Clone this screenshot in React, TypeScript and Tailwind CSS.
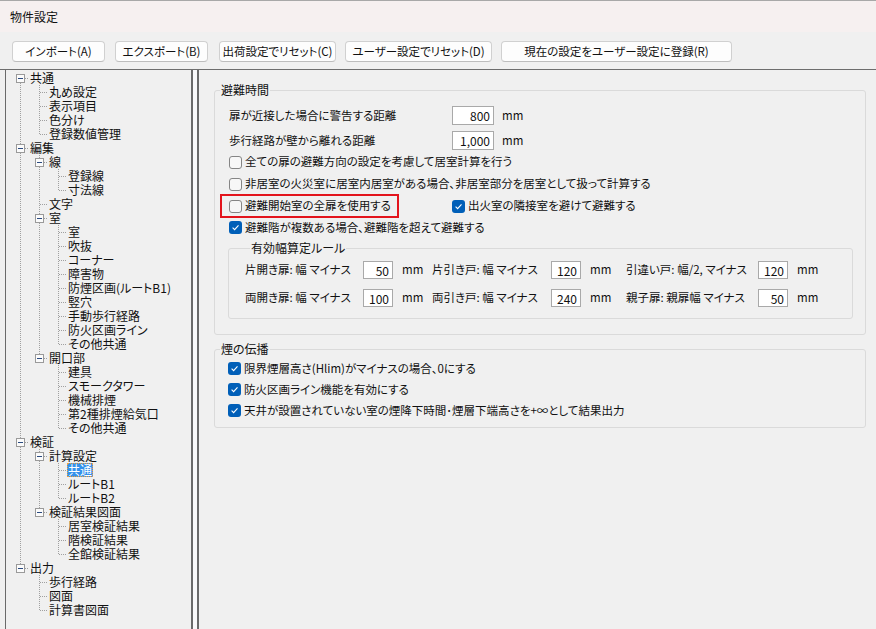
import clsx from "clsx";

type TreeNode = { label: string; selected?: boolean; children?: TreeNode[] };

type TreeRow = {
  label: string;
  rails: boolean[];
  last: boolean;
  first: boolean;
  expandable: boolean;
  selected?: boolean;
};

const leaf = (...labels: string[]): TreeNode[] => labels.map((label) => ({ label }));

const tree: TreeNode[] = [
  { label: "共通", children: leaf("丸め設定", "表示項目", "色分け", "登録数値管理") },
  {
    label: "編集",
    children: [
      { label: "線", children: leaf("登録線", "寸法線") },
      { label: "文字" },
      {
        label: "室",
        children: leaf(
          "室",
          "吹抜",
          "コーナー",
          "障害物",
          "防煙区画(ルートB1)",
          "竪穴",
          "手動歩行経路",
          "防火区画ライン",
          "その他共通",
        ),
      },
      {
        label: "開口部",
        children: leaf("建具", "スモークタワー", "機械排煙", "第2種排煙給気口", "その他共通"),
      },
    ],
  },
  {
    label: "検証",
    children: [
      {
        label: "計算設定",
        children: [{ label: "共通", selected: true }, { label: "ルートB1" }, { label: "ルートB2" }],
      },
      { label: "検証結果図面", children: leaf("居室検証結果", "階検証結果", "全館検証結果") },
    ],
  },
  { label: "出力", children: leaf("歩行経路", "図面", "計算書図面") },
];

const flatten = (nodes: TreeNode[], rails: boolean[], out: TreeRow[]) => {
  nodes.forEach((n, i) => {
    const last = i === nodes.length - 1;
    out.push({
      label: n.label,
      rails,
      last,
      first: rails.length === 0 && i === 0,
      expandable: !!n.children,
      selected: n.selected,
    });
    if (n.children) flatten(n.children, [...rails, !last], out);
  });
  return out;
};

const rows = flatten(tree, [], []);

const DOT = "#a0a0a0";

const TreeLine = ({ row }: { row: TreeRow }) => (
  <div className="flex h-[14px]">
    {row.rails.map((r, i) => (
      <svg key={i} width="19" height="14" className="shrink-0">
        {r && <line x1="10.5" y1="0" x2="10.5" y2="14" stroke={DOT} strokeDasharray="1 1" />}
      </svg>
    ))}
    <svg width="19" height="14" className="shrink-0">
      <line
        x1="10.5"
        y1={row.first ? 8 : 0}
        x2="10.5"
        y2={row.last ? 7 : 14}
        stroke={DOT}
        strokeDasharray="1 1"
      />
      <line x1="11" y1="7.5" x2="19" y2="7.5" stroke={DOT} strokeDasharray="1 1" />
      {row.expandable && (
        <>
          <rect x="6.5" y="3.5" width="8" height="8" fill="#fbfbfb" stroke="#9a9a9a" />
          <line x1="8" y1="7.5" x2="13" y2="7.5" stroke="#2a4a80" />
        </>
      )}
    </svg>
    <span
      className={clsx(
        "px-[1px] leading-[14px] whitespace-nowrap",
        row.selected &&
          "bg-[#3391ec] text-white outline outline-1 outline-dotted outline-[#f0a040] -outline-offset-1",
      )}
    >
      {row.label}
    </span>
  </div>
);

const Check = ({ checked }: { checked?: boolean }) => (
  <span
    className={clsx(
      "flex h-[13px] w-[13px] shrink-0 items-center justify-center rounded-[3px]",
      checked ? "bg-[#005fb8]" : "border border-[#858585] bg-[#f7f7f7]",
    )}
  >
    {checked && (
      <svg width="9" height="9" viewBox="0 0 9 9">
        <path d="M1.6 4.7 L3.6 6.6 L7.5 2.4" stroke="#fff" strokeWidth="1.1" fill="none" />
      </svg>
    )}
  </span>
);

const CheckItem = ({ checked, label, className }: { checked?: boolean; label: string; className?: string }) => (
  <label className={clsx("flex items-center gap-[3px] whitespace-nowrap", className)}>
    <Check checked={checked} />
    <span>{label}</span>
  </label>
);

const NumBox = ({ value, className }: { value: string; className?: string }) => (
  <input
    readOnly
    value={value}
    className={clsx(
      "border border-[#a9a9a9] bg-white pr-[3px] text-right text-[12px] leading-none outline-none",
      className,
    )}
  />
);

const WidthField = ({ label, value, labelW, className }: { label: string; value: string; labelW: string; className?: string }) => (
  <div className={clsx("flex items-center", className)}>
    <span className={clsx("whitespace-nowrap", labelW)}>{label}</span>
    <NumBox value={value} className="h-[18px] w-[30px]" />
    <span className="ml-[9px] w-[16px]">mm</span>
  </div>
);

const buttons = [
  { label: "インポート(A)", cls: "ml-[12px] w-[93px]" },
  { label: "エクスポート(B)", cls: "ml-[10px] w-[93px]" },
  { label: "出荷設定でリセット(C)", cls: "ml-[11px] w-[117px]" },
  { label: "ユーザー設定でリセット(D)", cls: "ml-[9px] w-[147px]" },
  { label: "現在の設定をユーザー設定に登録(R)", cls: "ml-[9px] w-[231px]" },
];

export default function App() {
  return (
    <div className="flex h-[629px] w-[876px] flex-col overflow-hidden bg-[#f0f0f0] font-['Noto_Sans_CJK_JP',sans-serif] text-[12px] text-[#111] [font-feature-settings:'palt']">
      <div className="flex h-[32px] items-center border-t border-[#a8a8a8] bg-[#f6f0f0] pl-[10px]">物件設定</div>

      <div className="flex h-[38px] border-b border-[#6d6d6d] pt-[9px]">
        {buttons.map((b) => (
          <button
            key={b.label}
            className={clsx(
              "h-[21px] rounded-[4px] border border-[#d0d0d0] border-b-[#bdbdbd] bg-[#fdfdfd] text-[11.5px] leading-none whitespace-nowrap",
              b.cls,
            )}
          >
            {b.label}
          </button>
        ))}
      </div>

      <div className="flex min-h-0 flex-1">
        <div className="ml-[5px] w-[188px] shrink-0 overflow-hidden border-l border-r-2 border-[#6a6a6a] pl-[4px] pt-[1px]">
          {rows.map((r, i) => (
            <TreeLine key={i} row={r} />
          ))}
        </div>
        <div className="w-[4px] shrink-0 bg-[#f9f9fa]" />
        <div className="min-w-0 flex-1 border-l-2 border-[#6a6a6a] pl-[15px] pt-[12px] text-[11.5px]">
          <fieldset className="w-[652px] rounded-[3px] border border-[#dadada] pb-[15px]">
            <legend className="ml-[5px] px-[1px] text-[12px] leading-[16px]">避難時間</legend>

            <div className="mt-[8px] flex h-[19px] items-center pl-[14px]">
              <span className="w-[223px]">扉が近接した場合に警告する距離</span>
              <NumBox value="800" className="h-[19px] w-[42px]" />
              <span className="ml-[8px]">mm</span>
            </div>
            <div className="mt-[6px] flex h-[19px] items-center pl-[14px]">
              <span className="w-[223px]">歩行経路が壁から離れる距離</span>
              <NumBox value="1,000" className="h-[19px] w-[42px]" />
              <span className="ml-[8px]">mm</span>
            </div>

            <div className="mt-[1px] flex h-[22px] items-center pl-[14px]">
              <CheckItem label="全ての扉の避難方向の設定を考慮して居室計算を行う" />
            </div>
            <div className="flex h-[22px] items-center pl-[14px]">
              <CheckItem label="非居室の火災室に居室内居室がある場合、非居室部分を居室として扱って計算する" />
            </div>
            <div className="-mt-[1px] flex h-[24px] items-center pl-[5px]">
              <div className="flex h-[24px] w-[179px] items-center border-2 border-[#e3141c] pl-[7px]">
                <CheckItem label="避難開始室の全扉を使用する" />
              </div>
              <CheckItem checked label="出火室の隣接室を避けて避難する" className="ml-[53px]" />
            </div>
            <div className="flex h-[19px] items-center pl-[14px]">
              <CheckItem checked label="避難階が複数ある場合、避難階を超えて避難する" />
            </div>

            <fieldset className="ml-[13px] mt-[3px] w-[625px] rounded-[3px] border border-[#dadada] pb-[11px] pl-[16px] pt-[5px]">
              <legend className="ml-[5px] px-[1px] text-[12px] leading-[16px]">有効幅算定ルール</legend>
              <div className="flex h-[18px] items-center">
                <WidthField label="片開き扉: 幅 マイナス" value="50" labelW="w-[118px]" />
                <WidthField label="片引き戸: 幅 マイナス" value="120" labelW="w-[119px]" className="ml-[14px]" />
                <WidthField label="引違い戸: 幅/2, マイナス" value="120" labelW="w-[132px]" className="ml-[20px]" />
              </div>
              <div className="mt-[10px] flex h-[18px] items-center">
                <WidthField label="両開き扉: 幅 マイナス" value="100" labelW="w-[118px]" />
                <WidthField label="両引き戸: 幅 マイナス" value="240" labelW="w-[119px]" className="ml-[14px]" />
                <WidthField label="親子扉: 親扉幅 マイナス" value="50" labelW="w-[132px]" className="ml-[20px]" />
              </div>
            </fieldset>
          </fieldset>

          <fieldset className="mt-[6px] w-[652px] rounded-[3px] border border-[#dadada] pb-[6px] pt-[1px]">
            <legend className="ml-[5px] px-[1px] text-[12px] leading-[16px]">煙の伝播</legend>
            <div className="flex h-[21px] items-center pl-[13px]">
              <CheckItem checked label="限界煙層高さ(Hlim)がマイナスの場合、0にする" />
            </div>
            <div className="flex h-[21px] items-center pl-[13px]">
              <CheckItem checked label="防火区画ライン機能を有効にする" />
            </div>
            <div className="flex h-[21px] items-center pl-[13px]">
              <CheckItem checked label="天井が設置されていない室の煙降下時間･煙層下端高さを+∞として結果出力" />
            </div>
          </fieldset>
        </div>
      </div>
    </div>
  );
}
